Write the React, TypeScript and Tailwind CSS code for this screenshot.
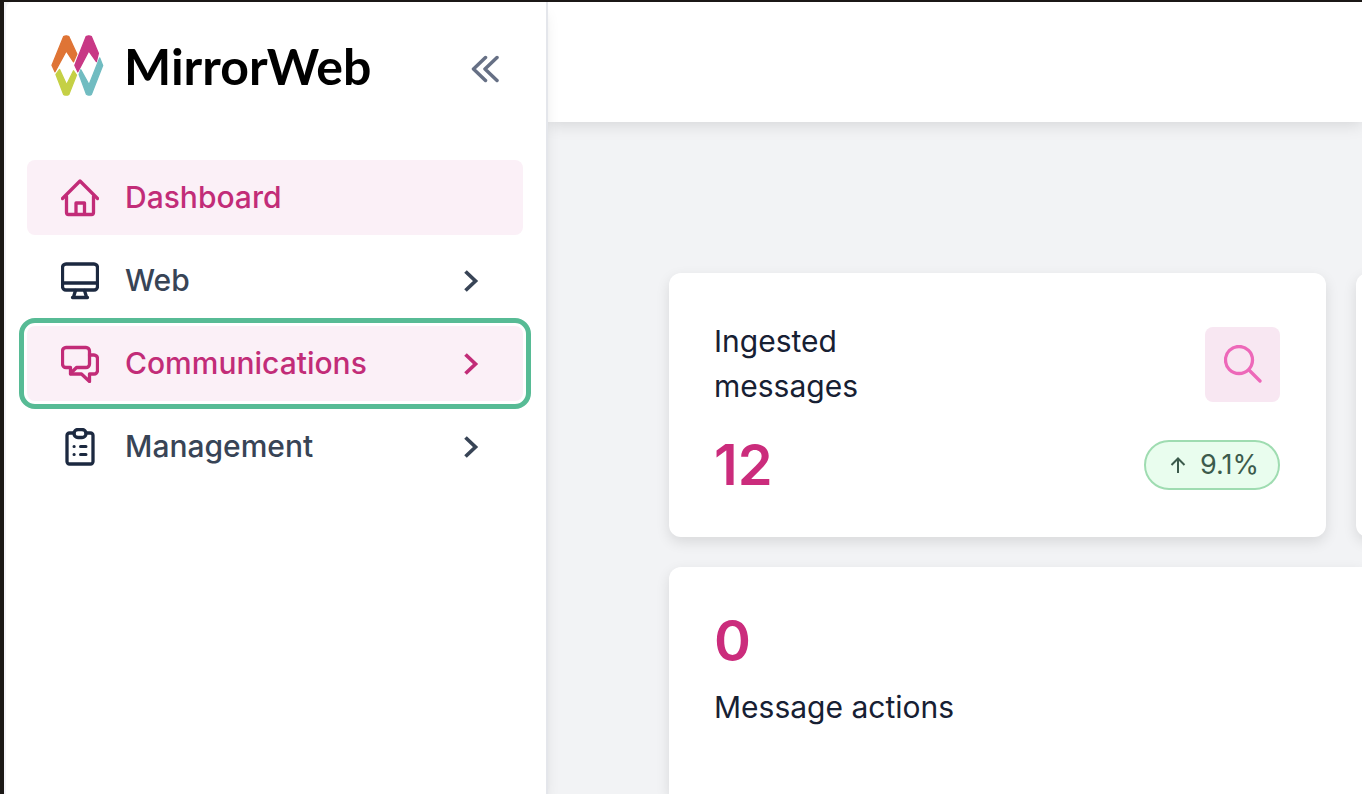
import type { ReactNode } from 'react';

type NavItem = {
    label: string;
    icon: ReactNode;
    active?: boolean;
    focused?: boolean;
    expandable?: boolean;
};

const iconProps = {
    viewBox: '0 0 38 38',
    fill: 'none',
    stroke: 'currentColor',
    strokeWidth: 3.3,
    strokeLinecap: 'round',
    strokeLinejoin: 'round',
    className: 'size-[38px] shrink-0',
    'aria-hidden': true,
} as const;

const HomeIcon = () => (
    <svg {...iconProps}>
        <path d="M1.5 19.5 19 2 36.5 19.500" />
        <path d="M5.5 17.5v16a2 2 0 0 0 2 2h23a2 2 0 0 0 2-2v-16" />
        <path d="M15 35v-11h8.500v11" />
    </svg>
);

const MonitorIcon = () => (
    <svg {...iconProps}>
        <rect x="1.5" y="2" width="35" height="26" rx="3.500" />
        <path d="M2 21h34M14.500 28.500l-2 6.500M23.500 28.500l2 6.500M11.500 35.500h15" />
    </svg>
);

const ChatIcon = () => (
    <svg {...iconProps}>
        <path d="M5 2.500h20a3.500 3.500 0 0 1 3.500 3.500v13a3.500 3.500 0 0 1-3.500 3.500H15.500L9.500 28.500v-6H5A3.500 3.500 0 0 1 1.500 19V6A3.500 3.500 0 0 1 5 2.500z" />
        <path d="M28.500 10h4.500a3.500 3.500 0 0 1 3.500 3.500v12a3.500 3.500 0 0 1-3.500 3.500h-4.500v7.500l-8-7.500H9.500" />
    </svg>
);

const ClipboardIcon = () => (
    <svg {...iconProps}>
        <path d="M13 5H8.500a2.500 2.500 0 0 0-2.500 2.500v26a2.500 2.500 0 0 0 2.500 2.500h21a2.500 2.500 0 0 0 2.500-2.500v-26A2.500 2.500 0 0 0 29.500 5H25" />
        <rect x="13" y="1.500" width="12" height="8" rx="4" />
        <path d="M13 18.500h.2M19.500 18.500h5.500M13 26.500h.2M19.500 26.500h5.500" strokeWidth="3" />
    </svg>
);

const NAV_ITEMS: NavItem[] = [
    { label: 'Dashboard', icon: <HomeIcon />, active: true },
    { label: 'Web', icon: <MonitorIcon />, expandable: true },
    { label: 'Communications', icon: <ChatIcon />, active: true, focused: true, expandable: true },
    { label: 'Management', icon: <ClipboardIcon />, expandable: true },
];

function Logo() {
    return (
        <a href="#" className="flex items-center gap-5 text-black">
            <svg viewBox="149 103 160 184" className="h-[61px] w-[53px]" aria-hidden="true" strokeWidth="4" strokeLinejoin="round">
                <path fill="#c5d045" stroke="#c5d045" d="M175 207 196 253 217 211 226 224 203 282 Q195 287 187 282L164 222z" />
                <path fill="#71bcc1" stroke="#71bcc1" d="M239 208 264 253 296 172 305 195 271 282Q263 287 256 282L234 222z" />
                <path fill="#df7435" stroke="#df7435" d="M187 108Q195 103 203 108L227 160 217 184 195 151 161 214 152 194z" />
                <path fill="#c83885" stroke="#c83885" d="M255 108Q263 103 271 108L292 158 286 183 263 151 230 214 221 194z" />
            </svg>
            <span className="font-[Lato] text-[50px] leading-[60px] font-bold">MirrorWeb</span>
        </a>
    );
}

function Sidebar() {
    return (
        <aside className="z-10 w-[544px] shrink-0 rounded-tl-lg border-r-2 border-l-2 border-r-[#e4e6eb] border-l-[#f3f3f8] bg-white pr-[23px] pl-[21px] shadow-lg">
            <div className="flex h-[158px] items-start justify-between px-6 pt-[33px]">
                <Logo />
                <button type="button" aria-label="Collapse sidebar" className="mt-5 text-[#667085]">
                    <svg viewBox="0 0 28 28" className="size-[28px]" fill="none" stroke="currentColor" strokeWidth="3.5" strokeLinecap="round" strokeLinejoin="round">
                        <path d="M14.500 2.500 2.500 14l12 11.500M26 2.500 14 14l12 11.500" />
                    </svg>
                </button>
            </div>

            <nav className="flex flex-col gap-2">
                {NAV_ITEMS.map((item) => (
                    <a
                        key={item.label}
                        href="#"
                        className={`flex h-[75px] items-center rounded-lg pr-[44px] pl-[34px] text-[30px] font-medium ${
                            item.active ? 'bg-[#fbf0f7] text-[#c22c78]' : 'text-[#384456]'
                        } ${item.focused ? 'outline-[5px] outline-offset-[3px] outline-[#57bb95]' : ''}`}
                    >
                        <span className={item.active ? '' : 'text-[#1c2940]'}>{item.icon}</span>
                        <span className="ml-[26px] flex-1">{item.label}</span>
                        {item.expandable && (
                            <svg viewBox="0 0 16 24" className="h-[24px] w-[16px]" fill="none" stroke="currentColor" strokeWidth="3.7" aria-hidden="true">
                                <path d="m2.500 2.500 10 9.500-10 9.500" />
                            </svg>
                        )}
                    </a>
                ))}
            </nav>
        </aside>
    );
}

export default function App() {
    return (
        <div className="flex min-h-screen overflow-hidden border-t-2 border-l-4 border-[#1b1816] bg-[#f2f3f5] font-[Inter,sans-serif]">
            <Sidebar />

            <div className="flex min-w-0 flex-1 flex-col">
                <header className="h-[120px] bg-white shadow-[0_2px_16px_rgba(0,0,0,0.13)]" />

                <main className="flex flex-1 flex-col gap-[30px] overflow-hidden pt-[151px] pl-[121px]">
                    <div className="flex gap-[30px]">
                        <section className="w-[657px] shrink-0 rounded-xl bg-white pt-[46px] pr-[46px] pb-[44px] pl-[45px] shadow-[0_5px_14px_rgba(0,0,0,0.11)]">
                            <div className="flex items-center justify-between">
                                <h2 className="w-[180px] text-[30px] leading-[45px] text-[#172033]">Ingested messages</h2>
                                <button type="button" aria-label="Search messages" className="flex size-[75px] items-center justify-center rounded-lg bg-[#f8e7f2] text-[#ed68b9]">
                                    <svg {...iconProps}>
                                        <circle cx="15" cy="15" r="13.500" />
                                        <path d="m25 25 11 11" />
                                    </svg>
                                </button>
                            </div>
                            <div className="mt-[28px] flex items-center justify-between">
                                <p className="text-[56px] leading-[56px] font-semibold text-[#cb2c7c]">12</p>
                                <span className="flex h-[50px] items-center gap-[14px] rounded-full border-2 border-[#9fdcb1] bg-[#e9fdee] pr-[19px] pl-[24px] text-[27px] text-[#3c5b4c]">
                                    <svg viewBox="0 0 16 16" className="size-[16px]" fill="none" stroke="currentColor" strokeWidth="2" aria-hidden="true">
                                        <path d="M8 16V2M1.500 8 8 1.500 14.500 8" />
                                    </svg>
                                    9.1%
                                </span>
                            </div>
                        </section>
                        <section className="w-[657px] shrink-0 rounded-xl bg-white shadow-[0_5px_14px_rgba(0,0,0,0.11)]" />
                    </div>

                    <section className="flex-1 rounded-tl-xl bg-white px-[45px] pt-[46px] pb-[44px] shadow-[0_5px_14px_rgba(0,0,0,0.11)]">
                        <p className="text-[56px] leading-[56px] font-semibold text-[#cb2c7c]">0</p>
                        <h2 className="mt-4 text-[30px] leading-[45px] text-[#172033]">Message actions</h2>
                    </section>
                </main>
            </div>
        </div>
    );
}
